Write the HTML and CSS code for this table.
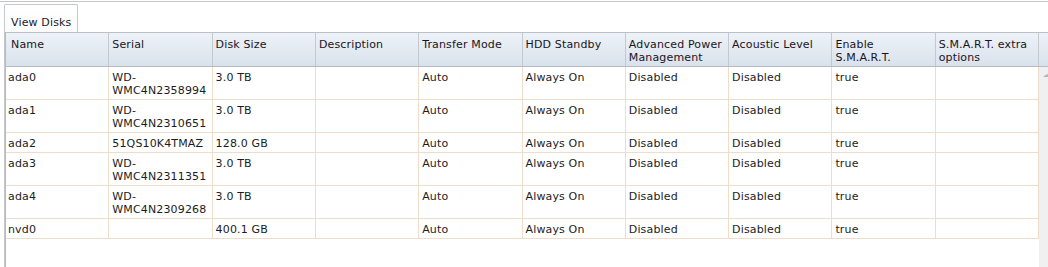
FILE: index.html
```html
<!DOCTYPE html>
<html>
<head>
<meta charset="utf-8">
<link rel="stylesheet" href="styles.css">
</head>
<body>
<div class="page">
  <div class="tabbar"><div class="tab">View Disks</div></div>
  <div class="pane">
    <div class="header">
      <div class="hcells">
        <div class="hc first">Name</div>
        <div class="hc">Serial</div>
        <div class="hc">Disk Size</div>
        <div class="hc">Description</div>
        <div class="hc">Transfer Mode</div>
        <div class="hc">HDD Standby</div>
        <div class="hc">Advanced Power Management</div>
        <div class="hc">Acoustic Level</div>
        <div class="hc">Enable S.M.A.R.T.</div>
        <div class="hc">S.M.A.R.T. extra options</div>
      </div>
      <div class="hfill"></div>
    </div>
    <div class="body">
      <div class="rows">
        <div class="row">
          <div class="c first">ada0</div><div class="c">WD-<br>WMC4N2358994</div><div class="c">3.0 TB</div><div class="c"></div><div class="c">Auto</div><div class="c">Always On</div><div class="c">Disabled</div><div class="c">Disabled</div><div class="c">true</div><div class="c"></div>
        </div>
        <div class="row">
          <div class="c first">ada1</div><div class="c">WD-<br>WMC4N2310651</div><div class="c">3.0 TB</div><div class="c"></div><div class="c">Auto</div><div class="c">Always On</div><div class="c">Disabled</div><div class="c">Disabled</div><div class="c">true</div><div class="c"></div>
        </div>
        <div class="row">
          <div class="c first">ada2</div><div class="c">51QS10K4TMAZ</div><div class="c">128.0 GB</div><div class="c"></div><div class="c">Auto</div><div class="c">Always On</div><div class="c">Disabled</div><div class="c">Disabled</div><div class="c">true</div><div class="c"></div>
        </div>
        <div class="row">
          <div class="c first">ada3</div><div class="c">WD-<br>WMC4N2311351</div><div class="c">3.0 TB</div><div class="c"></div><div class="c">Auto</div><div class="c">Always On</div><div class="c">Disabled</div><div class="c">Disabled</div><div class="c">true</div><div class="c"></div>
        </div>
        <div class="row">
          <div class="c first">ada4</div><div class="c">WD-<br>WMC4N2309268</div><div class="c">3.0 TB</div><div class="c"></div><div class="c">Auto</div><div class="c">Always On</div><div class="c">Disabled</div><div class="c">Disabled</div><div class="c">true</div><div class="c"></div>
        </div>
        <div class="row">
          <div class="c first">nvd0</div><div class="c"></div><div class="c">400.1 GB</div><div class="c"></div><div class="c">Auto</div><div class="c">Always On</div><div class="c">Disabled</div><div class="c">Disabled</div><div class="c">true</div><div class="c"></div>
        </div>
      </div>
      <div class="scroll"><div class="arrow"></div></div>
    </div>
  </div>
</div>
</body>
</html>
```

FILE: styles.css
```css
html, body {
  margin: 0;
  padding: 0;
  background: #ffffff;
}
body {
  font-family: "DejaVu Sans", Verdana, sans-serif;
  font-size: 11px;
  line-height: 13px;
  letter-spacing: 0.15px;
  color: #1c1c1c;
  width: 1048px;
  height: 267px;
  overflow: hidden;
}
.page {
  margin-top: 1px;
  border-top: 1px solid #c6c6c6;
  height: 265px;
  display: flex;
  flex-direction: column;
}
.tabbar {
  display: flex;
  padding: 2px 0 0 4px;
}
.tab {
  border: 1px solid #c4c9cf;
  border-bottom: none;
  border-radius: 2px 2px 0 0;
  background: linear-gradient(#ffffff, #fbfbfb);
  padding: 11px 6px 3px 6px;
  color: #1a1a2a;
}
.pane {
  flex: 1;
  margin-left: 4px;
  border-left: 1px solid #c3c7cc;
  display: flex;
  flex-direction: column;
}
.header {
  display: flex;
  border-top: 1px solid #b9c0c8;
  border-bottom: 1px solid #b5bcc6;
  background: linear-gradient(#edf2f7, #d9e2ec);
}
.hcells {
  width: 1034px;
  flex: none;
  display: grid;
  grid-template-columns: repeat(10, 1fr);
  border-left: 1px solid #b5bcc7;
  box-sizing: border-box;
}
.hc {
  padding: 5px 3px 2px 3px;
  border-right: 1px solid #c2c9d1;
  height: 26px;
  color: #1a1424;
}
.hc.first {
  padding-left: 5px;
}
.hfill {
  flex: 1;
}
.body {
  flex: 1;
  display: flex;
}
.rows {
  width: 1034px;
  flex: none;
  border-left: 1px solid #b5bcc7;
  box-sizing: border-box;
}
.row {
  display: grid;
  grid-template-columns: repeat(10, 1fr);
  border-bottom: 1px solid #f0dcca;
}
.c {
  padding: 4px 3px 2px 3px;
  border-right: 1px solid #f0dcca;
  white-space: nowrap;
  overflow: hidden;
}
.c.first {
  padding-left: 2px;
}
.scroll {
  flex: 1;
  background: #f0f0f0;
  padding: 7px 0 0 4px;
}
.arrow {
  width: 0;
  height: 0;
  border-left: 4px solid transparent;
  border-right: 4px solid transparent;
  border-bottom: 3px solid #b4b4b4;
}
```
